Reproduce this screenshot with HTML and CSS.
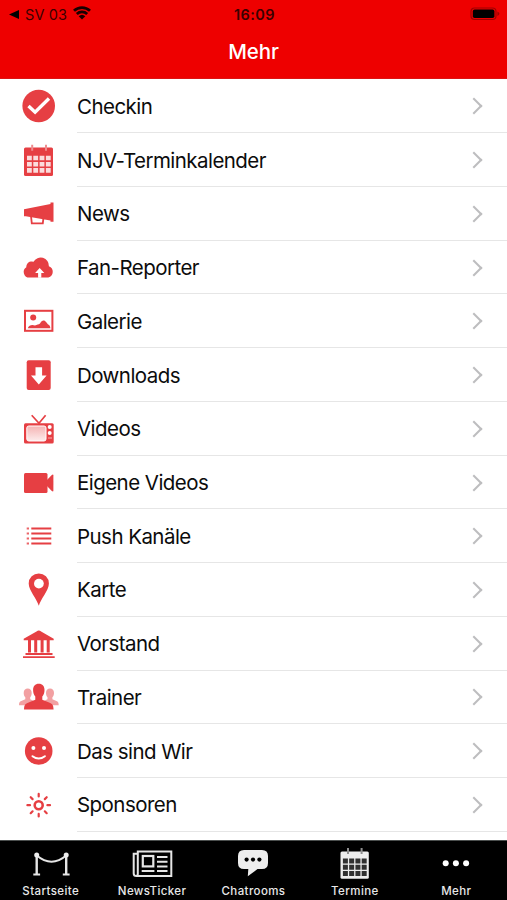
FILE: index.html
```html
<!DOCTYPE html>
<html lang="de"><head>
<meta charset="UTF-8">
<meta name="viewport" content="width=device-width, initial-scale=1.0">
<title>Mehr</title>
<link rel="stylesheet" href="styles.css">
</head>
<body>
<header class="top">
<div class="status">
<div class="back">
<svg class="backarrow" viewBox="0 0 10 9"><path d="M0 4.5L10 0v9z"/></svg>
<span class="app">SV 03</span>
<svg class="wifi" viewBox="0 0 18 14"><path d="M1 4.8a11.5 11.5 0 0 1 16 0M3.8 7.9a7.5 7.5 0 0 1 10.4 0"/><path class="dot" d="M9 13.5L5.7 10.2a4.8 4.8 0 0 1 6.6 0z"/></svg>
</div>
<span class="time">16:09</span>
<svg class="battery" viewBox="0 0 30 14"><rect class="case" x="1" y="1" width="25" height="11.5" rx="3.5"/><rect x="2.8" y="2.6" width="21.6" height="8.4" rx="1.8"/><path class="cap" d="M27.4 4.5q2 1 2 2.3t-2 2.3z"/></svg>
</div>
<h1>Mehr</h1>
</header>

<ul class="list">
<li><svg class="icon" viewBox="0 0 40 40"><circle cx="19.7" cy="20" r="16.3"/><path class="cut" stroke-width="3.4" d="M9.5 20l6.600 6.200L30 12.500"/></svg><a>Checkin</a></li>
<li><svg class="icon" viewBox="0 0 40 40"><rect x="5" y="7.500" width="29" height="28.500" rx="1.5"/><path class="ring" d="M13.2 4.7v6M27 4.7v6"/><path class="cells" d="M8 18h24M8 24.2h24M8 30.4h24"/></svg><a>NJV-Terminkalender</a></li>
<li><svg class="icon" viewBox="0 0 40 40"><path d="M5 15.2L31.5 10V8.6h3v19.2h-3v-1.3L6.8 22.2H5z"/><path class="line" stroke-width="1.8" d="M12 22l.8 7.4h11l.6-5"/></svg><a>News</a></li>
<li><svg class="icon" viewBox="0 0 40 40"><path d="M10.500 29.600a5.600 5.600 0 0 1-3.200-10.300 5.400 5.400 0 0 1 7.200-5.500 8.200 8.200 0 0 1 15.400 4.400 6 6 0 0 1-.6 11.400z"/><path class="hole" d="M20.700 20l4.600 5h-3v4.800h-3.200V25h-3z"/></svg><a>Fan-Reporter</a></li>
<li><svg class="icon" viewBox="0 0 40 40"><rect class="line" x="6" y="9.8" width="27.4" height="20" stroke-width="2"/><circle cx="14.2" cy="16.6" r="3"/><path d="M8.8 27.2c1-2.6 4-4 7.2-2.6 2-1 3.6-.8 5-2 1.4-2.8 3.2-3.6 5-2.6 1.6.9 2.2 3.2 4 4 .8.6 1.2 1.8 1.4 3.2z"/></svg><a>Galerie</a></li>
<li><svg class="icon" viewBox="0 0 40 40"><rect x="7.7" y="5.2" width="24" height="29.800" rx="2"/><path class="hole" d="M16.5 12.3h6.600v8.200h4.500L19.800 29.500 12 20.500h4.500z"/></svg><a>Downloads</a></li>
<li><svg class="icon" viewBox="0 0 40 40"><defs><linearGradient id="screen" x1="0" y1="0" x2="0" y2="1"><stop offset="0" stop-color="#f5b3b3"/><stop offset="1" stop-color="#fdecec"/></linearGradient></defs><path class="line" stroke-width="1.7" d="M12.700 6.300l7.300 8 6.600-8"/><rect x="5" y="14.2" width="29.700" height="20.400" rx="1.5"/><rect x="7.800" y="17" width="19.200" height="15" rx="2" fill="url(#screen)" stroke="#fff" stroke-width="1"/><circle class="hole" cx="30.700" cy="18" r="2"/><circle class="hole" cx="30.700" cy="24" r="2"/><path class="vent" d="M29 29h4"/></svg><a>Videos</a></li>
<li><svg class="icon" viewBox="0 0 40 40"><rect x="5" y="10" width="23.500" height="20" rx="1.5"/><path d="M27 18l5.800-6q1.600-1 1.600.6v14.800q0 1.600-1.600.6L27 22z"/></svg><a>Eigene Videos</a></li>
<li><svg class="icon" viewBox="0 0 40 40"><path class="line" stroke-width="2.200" d="M12.300 12.500h20M12.300 17.500h20M12.300 22.500h20M12.300 27.500h20"/><path class="line" opacity=".8" stroke-width="2.200" d="M7.700 12.500h2.300M7.700 17.500h2.300M7.700 22.500h2.300M7.700 27.500h2.300"/></svg><a>Push Kanäle</a></li>
<li><svg class="icon" viewBox="0 0 40 40"><path d="M19.800 35.800C18 29 9.700 20.500 9.700 13.500a10.100 10.100 0 0 1 20.200 0c0 7-8.300 15.500-10.100 22.300z"/><circle class="hole" cx="19.900" cy="13.600" r="4.900"/></svg><a>Karte</a></li>
<li><svg class="icon" viewBox="0 0 40 40"><path d="M4.700 14.800L17.500 7.400q2.300-1.600 4.600 0l12.600 7.400v1.500h-30zM9 16h3v12.500H9zM15.200 16h3v12.500h-3zM21.600 16h3v12.500h-3zM27.700 16h3v12.500h-3zM6.500 29h27v1.900h-27zM4 32.200h31.700v1.900H4z"/></svg><a>Vorstand</a></li>
<li><svg class="icon" viewBox="0 0 40 40"><g class="pale"><path d="M8.700 11.600c2.500 0 4 1.600 4 4.300 0 2-.6 3.200-1.500 4.300v2l3.800 1.800v4.300H0c0-3 .7-3.900 2.300-4.400l4-1.700v-2c-1-1.100-1.600-2.300-1.600-4.300 0-2.700 1.500-4.300 4-4.300z"/><path d="M31 11.600c-2.500 0-4 1.600-4 4.300 0 2 .6 3.200 1.500 4.300v2L24.700 24v4.300h15c0-3-.7-3.900-2.300-4.400l-4-1.700v-2c1-1.100 1.600-2.300 1.600-4.300 0-2.700-1.500-4.300-4-4.300z"/></g><path d="M19.800 6.700c3.700 0 5.700 2.400 5.700 6.200 0 3-.8 4.800-2.200 6.500v3.300l7.300 3c3 1 3.800 2.500 4 6.900H5c.2-4.400 1-5.900 4-6.900l7.300-3v-3.300c-1.400-1.700-2.200-3.500-2.200-6.500 0-3.800 2-6.200 5.700-6.200z"/></svg><a>Trainer</a></li>
<li><svg class="icon" viewBox="0 0 40 40"><circle cx="19.7" cy="20" r="13.800"/><circle class="hole" cx="14.400" cy="17" r="2"/><circle class="hole" cx="25" cy="17" r="2"/><path class="cut" stroke-width="2" stroke-linecap="round" d="M13.500 25.200q6.200 4.600 12.400 0"/></svg><a>Das sind Wir</a></li>
<li><svg class="icon" viewBox="0 0 40 40"><circle class="line" cx="19.7" cy="20.200" r="4" stroke-width="2.600"/><path class="line" stroke-width="2.200" stroke-linecap="round" d="M19.700 8.900v2.600M19.700 28.900v2.600M8.400 20.200h2.600M28.400 20.200h2.600M11.700 12.200l1.900 1.900M25.800 26.300l1.900 1.900M11.700 28.200l1.900-1.900M25.800 14.100l1.900-1.900"/></svg><a>Sponsoren</a></li>
</ul>

<nav class="tabs">
<a><svg viewBox="0 0 42 32"><g class="wline"><path stroke-width="2.400" d="M6.700 6v19.500M36.200 6v19.500"/><path stroke-width="2" d="M6.800 6.500q14.700 12.500 29.400 0"/><path stroke-width="2" d="M3.300 25.400h6.800M32.800 25.400h6.800"/></g><circle cx="6.700" cy="6" r="2.500"/><circle cx="36.200" cy="6" r="2.500"/></svg>Startseite</a>
<a><svg viewBox="0 0 42 32"><g class="wline"><path stroke-width="2" d="M6.800 2.500h33.500v24.600H5.400q-2.700 0-2.700-2.500V4.800h4.100zM6.800 4.500v20.500q0 2-1.800 2"/><rect x="11.800" y="7" width="10.500" height="10.400" stroke-width="2.200"/><path stroke-width="2" d="M26 8h10.500M26 12.700h10.500M26 17.400h10.500M10.700 22h12.700M26 22h10.500"/></g></svg>NewsTicker</a>
<a><svg viewBox="0 0 42 32"><path d="M12 1h18q6 0 6 6v7q0 6-6 6h-4.500l-9.700 7.300.5-7.300H12q-6 0-6-6V7q0-6 6-6z"/><circle class="black" cx="14.600" cy="10.600" r="2.100"/><circle class="black" cx="21" cy="10.600" r="2.100"/><circle class="black" cx="27.400" cy="10.600" r="2.100"/></svg>Chatrooms</a>
<a><svg viewBox="0 0 42 32"><rect x="6.500" y="2.500" width="28.300" height="27.200" rx="1.500"/><path class="tabring" d="M14 -1v6M27.600 -1v6"/><path class="tabcells" d="M8.900 12h23.800M8.900 18.300h23.800M8.900 24.600h23.800"/></svg>Termine</a>
<a><svg viewBox="0 0 42 32"><g class="white"><circle cx="10.700" cy="14.200" r="3"/><circle cx="20.900" cy="14.200" r="3"/><circle cx="31.100" cy="14.200" r="3"/></g></svg>Mehr</a>
</nav>
</body></html>
```
FILE: styles.css
```css
* {
	box-sizing: border-box;
}

body {
	margin: 0;
	height: 900px;
	display: flex;
	flex-direction: column;
	overflow: hidden;
	background: white;
	color: #0c0c0c;
	font-family: Inter, "Liberation Sans", sans-serif;
}

.top {
	flex: none;
	height: 79px;
	background: #ee0000;
	border-bottom: 1px solid #dc1414;
}

.status {
	display: grid;
	grid-template-columns: 1fr auto 1fr;
	align-items: center;
	height: 28px;
	padding: 0 7px 0 9px;
	color: #3a0000;
}

.back {
	display: flex;
	align-items: center;
}

.backarrow {
	width: 10px;
	height: 9px;
	margin-right: 6px;
}

.app {
	font-size: 14.5px;
	letter-spacing: 0.1px;
}

.wifi {
	width: 18px;
	height: 14px;
	margin: 0 0 2px 6px;
}

.wifi path {
	fill: none;
	stroke: #180000;
	stroke-width: 2.8;
}

.wifi .dot {
	fill: #180000;
	stroke: none;
}

.time {
	font-size: 14.5px;
	font-weight: 600;
	letter-spacing: 0.4px;
}

.battery {
	justify-self: end;
	width: 30px;
	height: 14px;
}

.battery .case {
	fill: none;
	stroke: #a00000;
	stroke-width: 1.2;
}

.battery .cap {
	fill: #a00000;
}

h1 {
	margin: 0;
	color: white;
	font-size: 20.5px;
	font-weight: 500;
	line-height: 48px;
	letter-spacing: -0.1px;
	text-align: center;
}

.list {
	flex: 1;
	min-height: 0;
	margin: 0;
	padding: 0.5px 0 0 19px;
	overflow: hidden;
	list-style: none;
}

.list li {
	display: flex;
	align-items: center;
	height: 53.74px;
}

.icon {
	flex: none;
	width: 40px;
	height: 40px;
	fill: #e63f43;
}

.list a {
	flex: 1;
	display: flex;
	align-items: center;
	justify-content: space-between;
	height: 100%;
	margin-left: 18px;
	padding: 1px 27.5px 0 0;
	border-bottom: 1px solid #e6e6e6;
	font-size: 20.5px;
	letter-spacing: -0.55px;
}

/* chevron */
.list a::after {
	content: "";
	width: 10px;
	height: 10px;
	border: solid #bdbdbf;
	border-width: 2px 2px 0 0;
	transform: rotate(45deg);
}

.line {
	fill: none;
	stroke: #e63f43;
}

.cut {
	fill: none;
	stroke: white;
}

.hole {
	fill: white;
}

.pale {
	fill: #f2a0a2;
}

.ring {
	stroke: #ee8c8e;
	stroke-width: 2;
}

.cells {
	stroke: #fbdcdc;
	stroke-width: 4.6;
	stroke-dasharray: 4.8 1.5;
}

.vent {
	stroke: #f5b3b3;
	stroke-width: 1;
}

.tabs {
	flex: none;
	display: grid;
	grid-template-columns: repeat(5, 1fr);
	height: 60px;
	padding-top: 8px;
	background: black;
	border-top: 1px solid #4b4f4e;
	color: #e8e8e8;
}

.tabs a {
	display: flex;
	flex-direction: column;
	align-items: center;
	font-size: 11.5px;
	font-weight: 500;
	line-height: 16px;
	letter-spacing: 0.4px;
}

.tabs svg {
	width: 42px;
	height: 32px;
	margin-bottom: 2px;
	overflow: visible;
	fill: #ededed;
}

.wline {
	fill: none;
	stroke: #e6e6e6;
}

.tabs .black {
	fill: black;
}

.tabs .white {
	fill: white;
}

.tabring {
	stroke: #8f8f8f;
	stroke-width: 2;
}

.tabcells {
	stroke: #303030;
	stroke-width: 5;
	stroke-dasharray: 5 1.26;
}
```
